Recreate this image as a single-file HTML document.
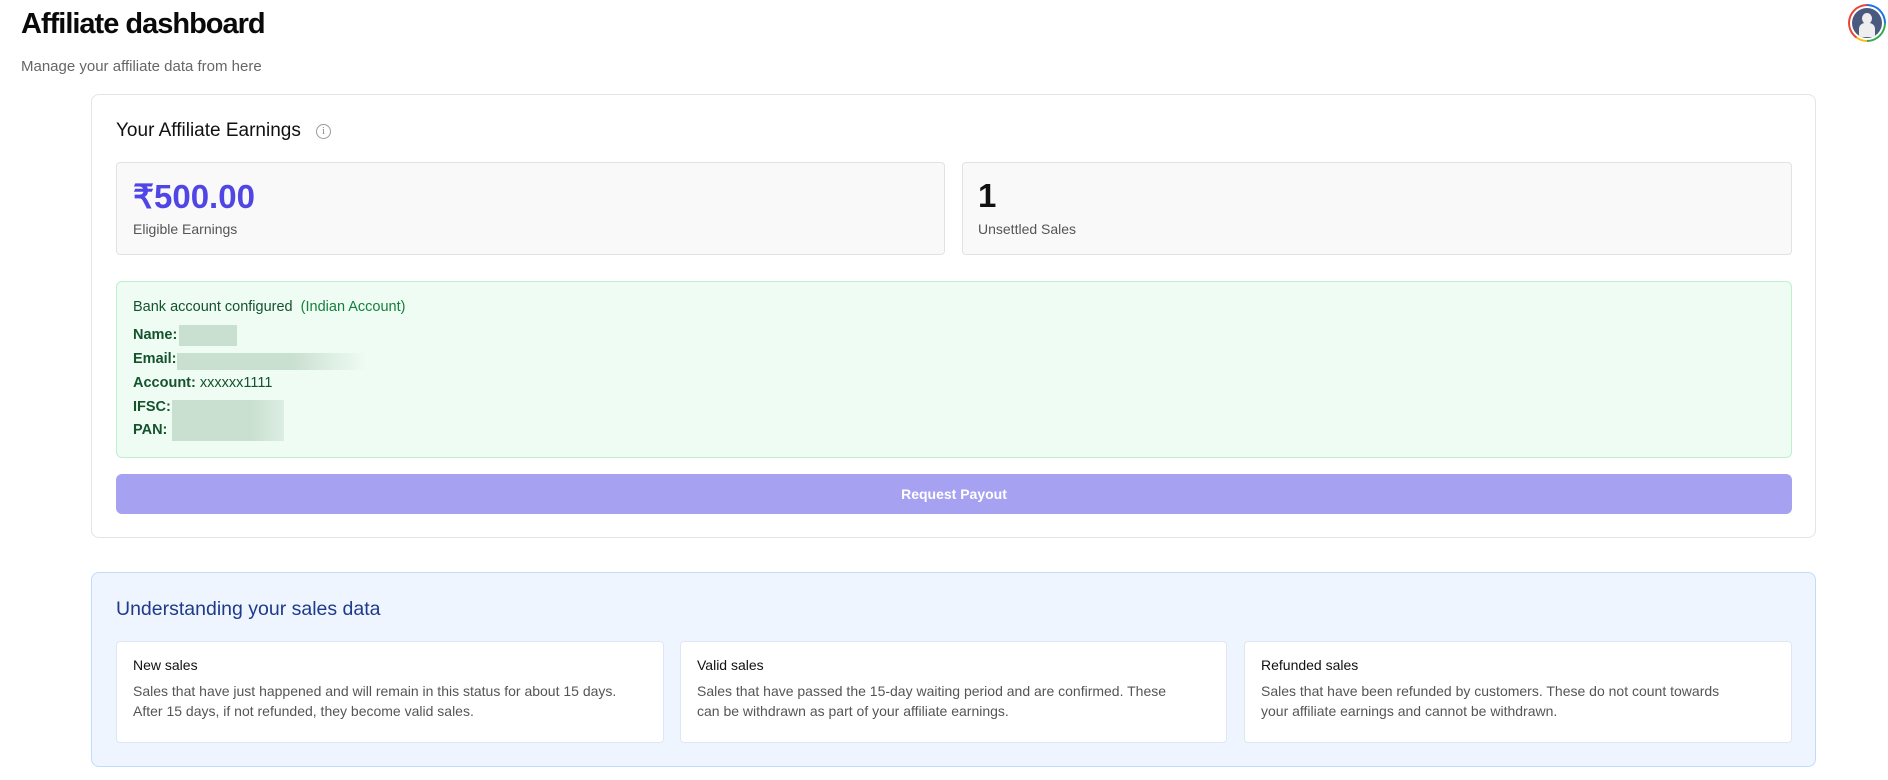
<!DOCTYPE html>
<html><head><meta charset="utf-8"><style>
*{box-sizing:border-box;margin:0;padding:0}
body{width:1888px;height:780px;background:#fff;font-family:"Liberation Sans",Arial,sans-serif;position:relative;overflow:hidden;color:#111}
.a{position:absolute}
h1{position:absolute;left:21px;top:8px;font-size:29px;font-weight:bold;letter-spacing:-1px;color:#0a0a0a}
.sub{left:21px;top:58px;font-size:15px;color:#666}
.card1{left:91px;top:94px;width:1725px;height:444px;border:1px solid #e4e4e7;border-radius:8px}
.stat{top:162px;height:93px;background:#f9f9f9;border:1px solid #e2e2e2;border-radius:4px}
.big{font-size:33px;font-weight:bold}
.lbl{font-size:14px;color:#555}
.green{left:116px;top:281px;width:1676px;height:177px;background:#effcf3;border:1px solid #bdf0cf;border-radius:6px}
.gl{left:133px;font-size:14.5px;color:#14532d}
.gl b{font-weight:bold}
.blur{background:#c9dfd0}
.btn{left:116px;top:474px;width:1676px;height:40px;background:#a6a1f1;border-radius:6px;color:#fff;font-weight:bold;font-size:14px;text-align:center;line-height:40px}
.card2{left:91px;top:572px;width:1725px;height:195px;background:#eef5ff;border:1px solid #bfdbfe;border-radius:8px}
.sc{top:641px;height:102px;background:#fff;border:1px solid #dfe7f3;border-radius:4px;padding:15px 16px 15px 16px}
.sc h3{font-size:14px;font-weight:normal;color:#111;margin-bottom:8px}
.sc p{font-size:14px;line-height:20px;color:#555;white-space:nowrap}
</style></head><body>
<h1>Affiliate dashboard</h1>
<div class="a sub">Manage your affiliate data from here</div>
<div class="a" style="left:1848px;top:4px;width:38px;height:38px;border-radius:50%;background:conic-gradient(#1a73e8 0 25%,#34a853 25% 50%,#fbbc04 50% 60%,#ea4335 60% 100%);padding:2px">
 <div style="width:34px;height:34px;border-radius:50%;background:#fff;padding:2px"><div style="width:30px;height:30px;border-radius:50%;background:#4a5a7f;position:relative;overflow:hidden">
 <div style="position:absolute;left:10px;top:5px;width:10px;height:11px;border-radius:50%;background:#eee"></div>
 <div style="position:absolute;left:7px;top:15px;width:16px;height:14px;border-radius:6px 6px 0 0;background:#eee"></div></div></div>
</div>
<div class="a card1"></div>
<div class="a" style="left:116px;top:120px;font-size:19px;color:#111">Your Affiliate Earnings</div>
<div class="a" style="left:316px;top:124px;width:15px;height:15px;border:1px solid #999;border-radius:50%;font-size:10px;color:#888;text-align:center;line-height:13px;font-family:'Liberation Serif',serif">i</div>
<div class="a stat" style="left:116px;width:829px"></div>
<div class="a stat" style="left:962px;width:830px"></div>
<div class="a big" style="left:133px;top:177px;color:#4f46e5">₹500.00</div>
<div class="a lbl" style="left:133px;top:221px">Eligible Earnings</div>
<div class="a big" style="left:978px;top:177px;color:#111">1</div>
<div class="a lbl" style="left:978px;top:221px">Unsettled Sales</div>
<div class="a green"></div>
<div class="a gl" style="top:299px">Bank account configured &nbsp;<span style="color:#15803d">(Indian Account)</span></div>
<div class="a gl" style="top:327px"><b>Name:</b></div>
<div class="a blur" style="left:179px;top:325px;width:58px;height:21px"></div>
<div class="a gl" style="top:351px"><b>Email:</b></div>
<div class="a" style="left:177px;top:353px;width:190px;height:17px;background:linear-gradient(90deg,#c9dfd0 60%,#effcf3)"></div>
<div class="a gl" style="top:375px"><b>Account:</b> xxxxxx1111</div>
<div class="a gl" style="top:399px"><b>IFSC:</b></div>
<div class="a gl" style="top:422px"><b>PAN:</b></div>
<div class="a" style="left:172px;top:400px;width:112px;height:41px;background:linear-gradient(90deg,#c9dfd0 70%,#dceee2)"></div>
<div class="a btn">Request Payout</div>
<div class="a card2"></div>
<div class="a" style="left:116px;top:598px;font-size:19.5px;color:#1e3a8a">Understanding your sales data</div>
<div class="a sc" style="left:116px;width:548px"><h3>New sales</h3><p>Sales that have just happened and will remain in this status for about 15 days.<br>After 15 days, if not refunded, they become valid sales.</p></div>
<div class="a sc" style="left:680px;width:547px"><h3>Valid sales</h3><p>Sales that have passed the 15-day waiting period and are confirmed. These<br>can be withdrawn as part of your affiliate earnings.</p></div>
<div class="a sc" style="left:1244px;width:548px"><h3>Refunded sales</h3><p>Sales that have been refunded by customers. These do not count towards<br>your affiliate earnings and cannot be withdrawn.</p></div>
</body></html>
